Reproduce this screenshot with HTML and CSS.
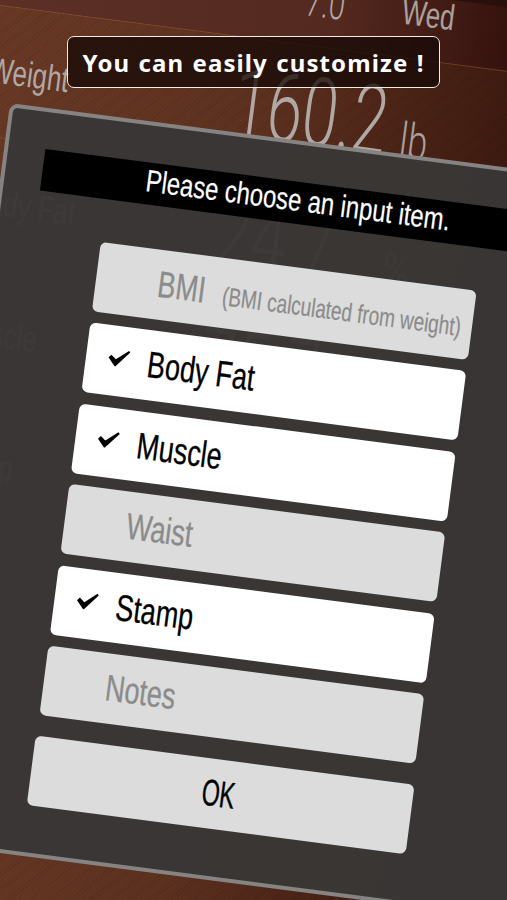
FILE: index.html
```html
<!DOCTYPE html>
<html lang="en">
<head>
<meta charset="utf-8">
<title>Choose input item</title>
<link rel="stylesheet" href="styles.css">
</head>
<body>
<main class="stage">
  <section class="records">
    <div class="record record-top"><span class="label"></span><span class="value value-small">7.0</span><span class="unit unit-day">Wed</span></div>
    <div class="record"><span class="label">Weight</span><span class="value">160.2</span><span class="unit">lb</span></div>
    <div class="record"><span class="label">Body Fat</span><span class="value">24.7</span><span class="unit">%</span></div>
    <div class="record"><span class="label">Muscle</span><span class="value">75.7</span><span class="unit"></span></div>
    <div class="record"><span class="label">Stamp</span><span class="value"></span><span class="unit"></span></div>
    <div class="record"><span class="label"></span><span class="value"></span><span class="unit"></span></div>
    <div class="record"><span class="label"></span><span class="value"></span><span class="unit"></span></div>
    <div class="record"><span class="label"></span><span class="value"></span><span class="unit"></span></div>
    <div class="record"><span class="label"></span><span class="value"></span><span class="unit"></span></div>
  </section>
  <section class="dialog">
    <h1 class="dialog-title"><span class="title-text">Please choose an input item.</span></h1>
    <ul class="options">
      <li class="option off"><span class="tick"></span><span class="text"><span class="name">BMI</span><span class="note">(BMI calculated from weight)</span></span></li>
      <li class="option"><svg class="tick" viewBox="0 0 22 18"><path d="M0.5 9.5 L3 6.5 L8 10.5 L20 0.5 L21.5 2 L8.5 17.5 L7.5 17.5 Z"/></svg><span class="text"><span class="name">Body Fat</span></span></li>
      <li class="option"><svg class="tick" viewBox="0 0 22 18"><path d="M0.5 9.5 L3 6.5 L8 10.5 L20 0.5 L21.5 2 L8.5 17.5 L7.5 17.5 Z"/></svg><span class="text"><span class="name">Muscle</span></span></li>
      <li class="option off"><span class="tick"></span><span class="text"><span class="name">Waist</span></span></li>
      <li class="option"><svg class="tick" viewBox="0 0 22 18"><path d="M0.5 9.5 L3 6.5 L8 10.5 L20 0.5 L21.5 2 L8.5 17.5 L7.5 17.5 Z"/></svg><span class="text"><span class="name">Stamp</span></span></li>
      <li class="option off"><span class="tick"></span><span class="text"><span class="name">Notes</span></span></li>
    </ul>
    <button class="ok" type="button"><span class="ok-text">OK</span></button>
  </section>
  <div class="banner">You can easily customize !</div>
</main>
</body>
</html>
```
FILE: styles.css
```css
* { box-sizing: border-box; }
html, body { margin: 0; padding: 0; background: #2a100b; }
.stage {
  position: relative;
  width: 507px;
  height: 900px;
  overflow: hidden;
  background: #2a100b;
  font-family: "Liberation Sans", sans-serif;
}
.records {
  position: absolute;
  left: -10px;
  top: -60px;
  width: 640px;
  transform-origin: 0 0;
  transform: rotate(7.4deg);
  display: flex;
  flex-direction: column;
}
.record {
  height: 131px;
  flex: none;
  display: flex;
  align-items: center;
  border-top: 1px solid rgba(200, 130, 70, .3);
  background:
    repeating-linear-gradient(135deg, rgba(0,0,0,.10) 0 1px, rgba(255,255,255,0) 1px 3px),
    linear-gradient(90deg, #6a3a26 0%, #5f3220 45%, #3e1a10 85%, #2c0f09 100%);
  color: #b0a8a4;
}
.record-top {
  height: 63px;
  border-top: 0;
  align-items: flex-end;
  background: linear-gradient(90deg, #5c3027 0%, #54291f 55%, #33100c 85%, #280b08 100%);
}
.label {
  width: 262px;
  padding-left: 22px;
  font-size: 36px;
  flex: none;
  white-space: nowrap;
  transform-origin: 0 50%;
  transform: scaleX(.72);
}
.value {
  width: 170px;
  font-family: Roboto, sans-serif;
  font-weight: 300;
  font-size: 96px;
  flex: none;
  transform-origin: 0 50%;
  transform: scaleX(.66);
  white-space: nowrap;
}
.value-small { font-size: 44px; padding: 0 0 22px 90px; line-height: 1; }
.unit {
  font-family: Roboto, sans-serif;
  font-weight: 300;
  font-size: 50px;
  padding-top: 34px;
  color: #a8a19d;
  transform-origin: 0 50%;
  transform: scaleX(.72);
}
.unit-day {
  font-family: "Liberation Sans", sans-serif;
  font-weight: 400;
  font-size: 36px;
  line-height: 1;
  margin-left: -14px;
  padding: 0 0 27px 0;
}
.dialog {
  position: absolute;
  left: 10px;
  top: 103px;
  width: 620px;
  height: 745px;
  transform-origin: 0 0;
  transform: rotate(7.4deg);
  background: rgba(57, 55, 54, .97);
  border: 4px solid #858483;
  border-radius: 9px;
  padding: 37px 0 0 37px;
}
.dialog-title {
  margin: 0;
  height: 42px;
  background: #000;
  color: #fff;
  font-size: 31px;
  font-weight: 400;
  line-height: 38px;
  padding-left: 104px;
  white-space: nowrap;
  -webkit-text-stroke: .2px #fff;
}
.title-text {
  display: inline-block;
  transform-origin: 0 50%;
  transform: scaleX(.77);
}
.options {
  list-style: none;
  margin: 42.5px 0 0 67px;
  padding: 0;
  width: 379px;
  display: flex;
  flex-direction: column;
  gap: 11.6px;
}
.option {
  height: 70px;
  background: #fff;
  border-radius: 6px;
  display: flex;
  align-items: flex-start;
  padding: 14px 0 0 22px;
  color: #000;
}
.option.off { background: #dcdcdc; color: #8b8b8b; }
.tick { width: 22px; height: 18px; flex: none; margin-top: 9px; }
.tick path { fill: #000; }
.text {
  display: flex;
  align-items: baseline;
  margin-left: 18px;
  transform-origin: 0 50%;
  transform: scaleX(.73);
  white-space: nowrap;
}
.name { font-size: 37px; line-height: 42px; -webkit-text-stroke: .3px currentColor; }
.note { font-size: 26px; margin-left: 24px; -webkit-text-stroke: .2px currentColor; }
.ok {
  display: block;
  margin: 21px 0 0 66px;
  width: 382px;
  height: 70px;
  border: 0;
  border-radius: 6px;
  background: #dcdcdc;
  color: #000;
  font-family: inherit;
  font-size: 37px;
  padding: 0 4px 0 0;
  -webkit-text-stroke: .4px #000;
}
.ok-text { display: inline-block; transform: scaleX(.62); }
.banner {
  position: absolute;
  left: 67px;
  top: 36px;
  width: 373px;
  height: 52px;
  border: 1.5px solid #f2ece6;
  border-radius: 7px;
  background: rgba(22, 9, 6, .76);
  color: #fff;
  font-family: "Noto Sans", sans-serif;
  font-weight: 700;
  font-size: 24px;
  letter-spacing: 1.1px;
  word-spacing: 1px;
  display: flex;
  align-items: center;
  justify-content: center;
  white-space: nowrap;
}
```
